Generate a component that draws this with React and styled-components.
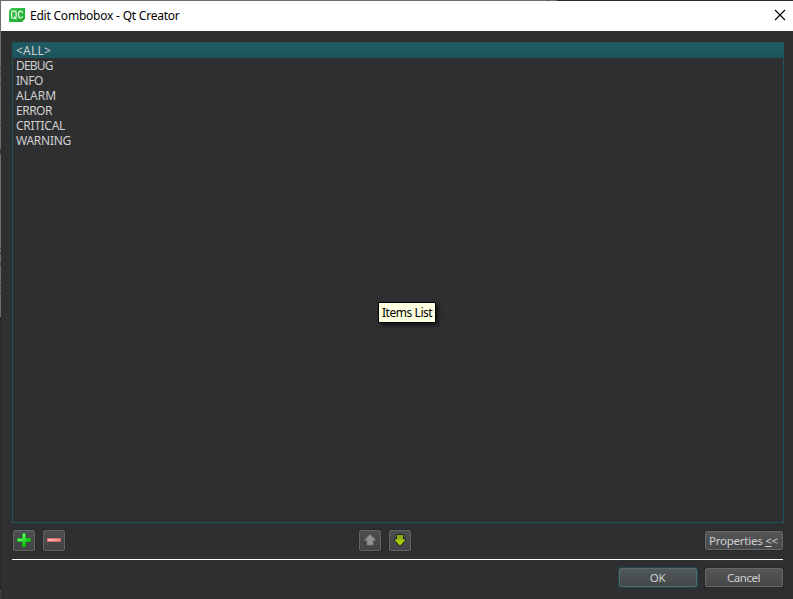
import React from "react";
import styled, { createGlobalStyle } from "styled-components";

const Global = createGlobalStyle`
  * { box-sizing: border-box; }
  body { margin: 0; overflow: hidden; background: #2e2f30; }
`;

const Window = styled.div`
  position: relative;
  width: 793px;
  height: 599px;
  display: flex;
  background: #2e2f30;
  font: 12px/15px "Noto Sans", "Open Sans", sans-serif;
  color: #d0d0d0;
  cursor: default;
`;

const LeftEdge = styled.div`
  flex: none;
  width: 1px;
  background: linear-gradient(
    #6c6c6c 0 67px, #3c3d3e 67px 68px, #6c6c6c 68px 73px, #3c3d3e 73px 74px,
    #6c6c6c 74px 83px, #3c3d3e 83px 84px, #6c6c6c 84px 125px, #3c3d3e 125px 126px,
    #6c6c6c 126px 149px, #49303f 149px 154px, #6c6c6c 154px 248px, #3c3d3e 248px 249px,
    #6c6c6c 249px 253px, #3c3d3e 253px 254px, #6c6c6c 254px 263px, #3c3d3e 263px 265px,
    #6c6c6c 265px 285px, #3c3d3e 285px 286px, #6c6c6c 286px 293px, #3c3d3e 293px 294px,
    #6c6c6c 294px 317px, #1f2021 317px 320px, #29292a 320px 588px, #111 588px 589px,
    #4c4945 589px 593px, #3c3b38 593px
  );
`;

const Dialog = styled.div`
  flex: 1;
  display: flex;
  flex-direction: column;
`;

const TopEdge = styled.div`
  flex: none;
  height: 1px;
  background: linear-gradient(90deg, #6c6c6c 0 546px, #3c3d3e 546px 547px, #6c6c6c 547px 556px, #29282b 556px);
`;

const TitleBar = styled.header`
  flex: none;
  height: 30px;
  display: flex;
  align-items: center;
  gap: 5px;
  padding: 0 7px 2px 8px;
  background: #fff;
  color: #000;
`;

const Title = styled.span`
  flex: 1;
  letter-spacing: -0.22px;
`;

const Content = styled.main`
  flex: 1;
  display: flex;
  flex-direction: column;
  padding: 11px 9px 0 11px;
`;

const List = styled.div`
  height: 481px;
  width: 772px;
  border: 1px solid #1d545c;
`;

const Item = styled.div`
  height: 15px;
  padding-left: 3px;
  letter-spacing: ${(p) => p.$spacing}px;
  ${(p) => p.$selected && "background: linear-gradient(#205b64, #1d545c);"}
`;

const ToolRow = styled.div`
  display: flex;
  height: 22px;
  margin: 6px 0 0 1px;
  width: 770px;
  align-items: center;
`;

const ButtonPair = styled.div`
  display: flex;
  gap: 8px;
  margin-left: ${(p) => p.$offset || 0}px;
`;

const ToolButton = styled.button`
  display: flex;
  align-items: flex-start;
  justify-content: center;
  width: 22px;
  height: 21px;
  margin-top: 1px;
  padding: 1px 0 0;
  border: 1px solid #646566;
  border-radius: 2px;
  box-shadow: 0 0 0 1px #28292a;
  background: linear-gradient(#4c4d4e, #434445);
`;

const PushButton = styled.button`
  display: flex;
  align-items: center;
  justify-content: center;
  width: 78px;
  height: 19px;
  padding: 0 1px 0 0;
  border: 1px solid ${(p) => (p.$primary ? "#5b686a" : "#68696a")};
  border-radius: 2px;
  box-shadow: 0 0 0 1px ${(p) => (p.$primary ? "#1d474d" : "#28292a")};
  background: linear-gradient(${(p) => (p.$primary ? "#505859, #434748" : "#555657, #464748")});
  font: inherit;
  font-size: 11.5px;
  color: #d0d0d0;
  letter-spacing: ${(p) => p.$spacing || 0}px;
  white-space: pre;
  margin-left: ${(p) => (p.$end ? "auto" : 0)};
`;

const Separator = styled.div`
  height: 1px;
  margin-top: 8px;
  width: 771px;
  background: #fff;
`;

const Footer = styled.footer`
  display: flex;
  justify-content: flex-end;
  gap: 8px;
  width: 771px;
  margin-top: 8px;
`;

const Tooltip = styled.div`
  position: absolute;
  left: 378px;
  top: 302px;
  width: 58px;
  height: 21px;
  padding: 2px 0 0 3px;
  border: 1px solid #000;
  background: #ffffe1;
  color: #000;
  box-shadow: 3px 3px 3px rgba(0, 0, 0, 0.45);
  white-space: nowrap;
  letter-spacing: -0.45px;
`;

const QtIcon = () => (
  <svg width="16" height="16" viewBox="0 0 16 16">
    <defs>
      <linearGradient id="qc" x1="0" y1="0" x2="1" y2="1">
        <stop offset="0" stopColor="#43c650" />
        <stop offset="1" stopColor="#16a52c" />
      </linearGradient>
    </defs>
    <path d="M2.500 1H16v10.500L13 15H0V3.500z" fill="url(#qc)" />
    <g fill="none" stroke="#e5f9e7" strokeWidth="1.2">
      <rect x="2.600" y="4.200" width="4.600" height="7" rx="1.800" />
      <path d="M5.300 9.700L7.500 12.300M13.600 6.300c-.3-1.400-.9-2.100-1.900-2.100-1.500 0-2.200 1.300-2.200 3.500s.7 3.500 2.200 3.500c1 0 1.600-.7 1.900-2" />
    </g>
  </svg>
);

const CloseIcon = () => (
  <svg width="12" height="12" viewBox="0 0 12 12">
    <path d="M1 1l10 10M11 1L1 11" stroke="#000" strokeWidth="1.150" />
  </svg>
);

const PlusIcon = () => (
  <svg width="16" height="16" viewBox="0 0 16 16">
    <defs>
      <linearGradient id="plus" x1="0" y1="0" x2="1" y2="1">
        <stop offset=".2" stopColor="#8af58a" />
        <stop offset=".5" stopColor="#3be03b" />
        <stop offset=".7" stopColor="#00c800" />
      </linearGradient>
    </defs>
    <path d="M6.500 1.500h3v5h5v3h-5v5h-3v-5h-5v-3h5z" fill="url(#plus)" stroke="#12bd12" strokeWidth=".9" />
  </svg>
);

const MinusIcon = () => (
  <svg width="16" height="16" viewBox="0 0 16 16">
    <defs>
      <linearGradient id="minus">
        <stop offset="0" stopColor="#ffb9b9" />
        <stop offset="1" stopColor="#f28282" />
      </linearGradient>
    </defs>
    <rect x="1.500" y="6.500" width="13" height="3" fill="url(#minus)" stroke="#e86a6a" strokeWidth=".8" />
  </svg>
);

const UpIcon = () => (
  <svg width="16" height="16" viewBox="0 0 16 16">
    <path d="M8 2.500l5 5v1h-2v4.500H5v-4.500H3v-1z" fill="#929292" stroke="#777" strokeWidth=".8" />
  </svg>
);

const DownIcon = () => (
  <svg width="16" height="16" viewBox="0 0 16 16">
    <defs>
      <linearGradient id="down" x1="0" y1="0" x2="0" y2="1">
        <stop offset="0" stopColor="#77a51c" />
        <stop offset="1" stopColor="#c3dc05" />
      </linearGradient>
    </defs>
    <path d="M4.500 2.500h7v4.500h2v1.500L8 14 2.500 8.500V7h2z" fill="url(#down)" stroke="#25291a" />
  </svg>
);

const items = [
  ["<ALL>", 0.25],
  ["DEBUG", -0.8],
  ["INFO", -0.45],
  ["ALARM", 0.05],
  ["ERROR", -0.5],
  ["CRITICAL", -0.3],
  ["WARNING", -0.25],
];

export default function App() {
  return (
    <Window>
      <Global />
      <LeftEdge />
      <Dialog>
        <TopEdge />
        <TitleBar>
          <QtIcon />
          <Title>Edit Combobox - Qt Creator</Title>
          <CloseIcon />
        </TitleBar>
        <Content>
          <List>
            {items.map(([label, spacing], i) => (
              <Item key={label} $selected={i === 0} $spacing={spacing}>
                {label}
              </Item>
            ))}
          </List>
          <ToolRow>
            <ButtonPair>
              <ToolButton aria-label="New item"><PlusIcon /></ToolButton>
              <ToolButton aria-label="Delete item"><MinusIcon /></ToolButton>
            </ButtonPair>
            <ButtonPair $offset={294}>
              <ToolButton aria-label="Move up"><UpIcon /></ToolButton>
              <ToolButton aria-label="Move down"><DownIcon /></ToolButton>
            </ButtonPair>
            <PushButton $end $spacing={-0.25}>Properties <u>&lt;</u>&lt;</PushButton>
          </ToolRow>
          <Separator />
          <Footer>
            <PushButton $primary $spacing={-0.4}>OK</PushButton>
            <PushButton $spacing={-0.5}>Cancel</PushButton>
          </Footer>
        </Content>
      </Dialog>
      <Tooltip>Items List</Tooltip>
    </Window>
  );
}
